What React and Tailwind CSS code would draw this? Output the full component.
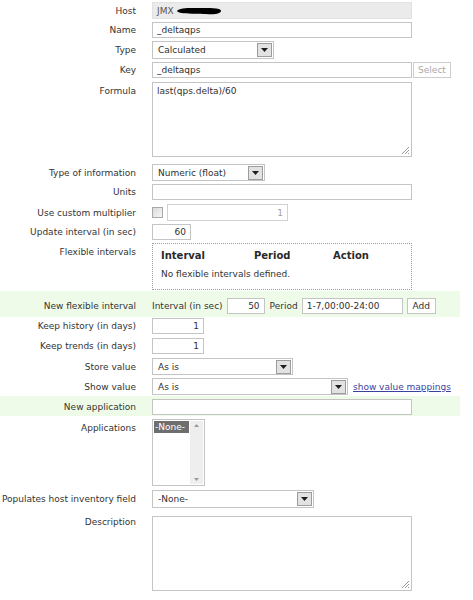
import React from 'react';

// small building blocks for the item form
function Row({ label, top, className = '', labelTop = false, labelPad = 'pt-[3px]', children }) {
  return (
    <div className={`flex w-[460px] ${labelTop ? 'items-start' : 'items-center'} ${top} ${className}`}>
      <div className={`w-[136px] shrink-0 text-right ${labelTop ? labelPad : ''}`}>{label}</div>
      <div className="ml-[16px] flex items-center">{children}</div>
    </div>
  );
}

function Box({ className = '', right = false, children }) {
  return (
    <div className={`flex items-center border border-[#c4c4c4] bg-white px-[4px] text-[#303030] ${right ? 'justify-end' : ''} ${className}`}>
      {children}
    </div>
  );
}

function Arrow() {
  return (
    <span className="ml-auto flex h-[14px] w-[15px] items-center justify-center border border-[#9c9c9c] bg-[#e2e2e2]">
      <svg width="7" height="4" viewBox="0 0 7 4">
        <path d="M0 0h7L3.5 4z" fill="#1e1e1e" />
      </svg>
    </span>
  );
}

function Select({ className, value }) {
  return (
    <div className={`flex items-center border border-[#c4c4c4] bg-white pl-[5px] pr-[1px] text-[#303030] ${className}`}>
      <span>{value}</span>
      <Arrow />
    </div>
  );
}

function Grip() {
  return (
    <svg className="absolute bottom-[1px] right-[1px]" width="10" height="10" viewBox="0 0 10 10">
      <path d="M9 2L2 9M9 5L5 9M9 8L8 9" stroke="#9a9a9a" strokeWidth="1" />
    </svg>
  );
}

function TextArea({ className, text }) {
  return (
    <div className={`relative border border-[#c4c4c4] bg-white px-[4px] pt-[2px] text-[#303030] ${className}`}>
      {text}
      <Grip />
    </div>
  );
}

export default function App() {
  return (
    <div className="min-h-[600px] bg-white font-['DejaVu_Sans',sans-serif] text-[9px] leading-[12px] text-[#333]">
      <Row label="Host" top="pt-[2px]">
        <div className="flex h-[17px] w-[260px] items-center gap-[2px] border border-[#e2e2e2] bg-[#ebebeb] px-[4px] text-[#555]">
          <span>JMX</span>
          <svg width="46" height="10" viewBox="0 0 46 10">
            <path d="M1 5C3 1 18 2 30 2S45 3 45 5S40 9 30 8S4 9 1 5z" fill="#000" />
          </svg>
        </div>
      </Row>

      <Row label="Name" top="pt-[3px]">
        <Box className="h-[16px] w-[260px]">_deltaqps</Box>
      </Row>

      <Row label="Type" top="pt-[3px]">
        <Select className="h-[18px] w-[122px]" value="Calculated" />
      </Row>

      <Row label="Key" top="pt-[3px]">
        <Box className="h-[16px] w-[260px]">_deltaqps</Box>
        <div className="ml-[1px] flex h-[16px] w-[38px] items-center justify-center border border-[#cdcdcd] bg-white text-[#a8a8a8]">
          Select
        </div>
      </Row>

      <Row label="Formula" top="pt-[4px]" labelTop>
        <TextArea className="h-[75px] w-[260px]" text="last(qps.delta)/60" />
      </Row>

      <Row label="Type of information" top="pt-[7px]">
        <Select className="h-[17px] w-[113px]" value="Numeric (float)" />
      </Row>

      <Row label="Units" top="pt-[3px]">
        <Box className="h-[16px] w-[260px]" />
      </Row>

      <Row label="Use custom multiplier" top="pt-[4px]">
        <span className="h-[11px] w-[11px] border border-[#a9a9a9] bg-gradient-to-br from-[#dcdcdc] to-[#f6f6f6]" />
        <Box right className="ml-[4px] h-[17px] w-[121px] border-[#d2d2d2] text-[#a0a0a0]">1</Box>
      </Row>

      <Row label="Update interval (in sec)" top="pt-[3px]">
        <Box right className="h-[16px] w-[39px]">60</Box>
      </Row>

      <Row label="Flexible intervals" top="pt-[3px]" labelTop>
        <div className="h-[47px] w-[260px] border border-dotted border-[#9c9c9c] px-[8px] pt-[5px]">
          <div className="flex text-[10px] font-bold leading-[13px] text-[#2a2a2a]">
            <span className="w-[93px]">Interval</span>
            <span className="w-[79px]">Period</span>
            <span>Action</span>
          </div>
          <div className="mt-[6px]">No flexible intervals defined.</div>
        </div>
      </Row>

      <div className="mt-[1px] w-[460px] bg-[#effbe9] pb-[3px] pt-[7px]">
        <Row label="New flexible interval" top="">
          <span>Interval (in sec)</span>
          <Box right className="ml-[4px] h-[16px] w-[38px]">50</Box>
          <span className="ml-[5px]">Period</span>
          <Box className="ml-[4px] h-[16px] w-[101px]">1-7,00:00-24:00</Box>
          <div className="ml-[4px] flex h-[16px] w-[29px] items-center justify-center border border-[#c4c4c4] bg-white text-[#303030]">
            Add
          </div>
        </Row>
      </div>

      <Row label="Keep history (in days)" top="pt-[1px]">
        <Box right className="h-[16px] w-[52px]">1</Box>
      </Row>

      <Row label="Keep trends (in days)" top="pt-[4px]">
        <Box right className="h-[16px] w-[52px]">1</Box>
      </Row>

      <Row label="Store value" top="pt-[4px]">
        <Select className="h-[17px] w-[141px]" value="As is" />
      </Row>

      <Row label="Show value" top="pt-[3px]">
        <Select className="h-[17px] w-[196px]" value="As is" />
        <a className="ml-[5px] text-[#3b3f9e] underline">show value mappings</a>
      </Row>

      <div className="mt-[1px] w-[460px] bg-[#effbe9] pb-[1px] pt-[3px]">
        <Row label="New application" top="">
          <Box className="h-[16px] w-[260px]" />
        </Row>
      </div>

      <Row label="Applications" top="pt-[3px]" labelTop>
        <div className="flex h-[67px] w-[53px] border border-[#c4c4c4] bg-white p-[1px]">
          <div className="flex-1">
            <div className="w-[35px] whitespace-nowrap bg-[#6e6e6e] px-[1px] text-white">-None-</div>
          </div>
          <div className="flex w-[13px] flex-col items-center justify-between bg-[#eeeeee] py-[3px]">
            <svg width="5" height="3" viewBox="0 0 5 3"><path d="M0 3h5L2.5 0z" fill="#9a9a9a" /></svg>
            <svg width="5" height="3" viewBox="0 0 5 3"><path d="M0 0h5L2.5 3z" fill="#9a9a9a" /></svg>
          </div>
        </div>
      </Row>

      <Row label="Populates host inventory field" top="pt-[4px]">
        <Select className="h-[18px] w-[162px]" value="-None-" />
      </Row>

      <Row label="Description" top="pt-[8px]" labelTop labelPad="pt-0">
        <TextArea className="h-[75px] w-[260px]" text="" />
      </Row>
    </div>
  );
}
